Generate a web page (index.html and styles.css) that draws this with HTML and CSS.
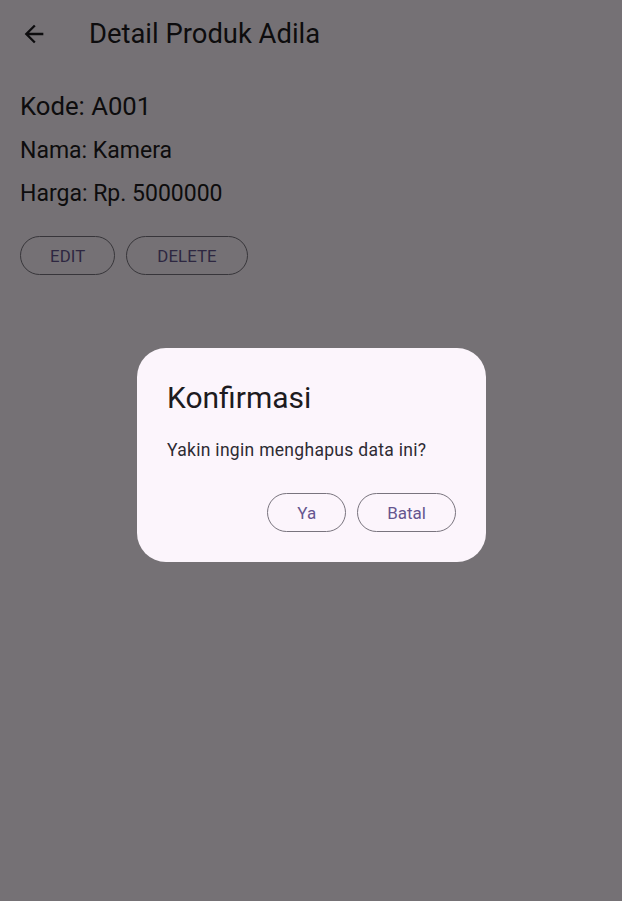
FILE: index.html
```html
<!DOCTYPE html>
<html>
<head>
<meta charset="utf-8">
<link rel="stylesheet" href="styles.css">
</head>
<body>
<div class="app">
  <header class="appbar">
    <button class="back" aria-label="Back">
      <svg width="24" height="24" viewBox="0 0 24 24"><path d="M20 11H7.83l5.59-5.59L12 4l-8 8 8 8 1.41-1.41L7.83 13H20v-2z" fill="currentColor"/></svg>
    </button>
    <h1 class="title">Detail Produk Adila</h1>
  </header>
  <main class="content">
    <p class="kode">Kode: A001</p>
    <p class="line">Nama: Kamera</p>
    <p class="line">Harga: Rp. 5000000</p>
    <div class="actions">
      <button class="obtn edit">EDIT</button>
      <button class="obtn delete">DELETE</button>
    </div>
  </main>
</div>
<div class="overlay">
  <div class="dialog">
    <h2 class="dtitle">Konfirmasi</h2>
    <p class="dtext">Yakin ingin menghapus data ini?</p>
    <div class="dactions">
      <button class="dbtn ya">Ya</button>
      <button class="dbtn batal">Batal</button>
    </div>
  </div>
</div>
</body>
</html>
```
FILE: styles.css
```css
* { box-sizing: border-box; }
html, body { margin: 0; padding: 0; }
body {
  width: 622px;
  height: 901px;
  background: #fef7ff;
  font-family: Roboto, "Liberation Sans", sans-serif;
  color: #1d1b20;
  overflow: hidden;
}
.app { height: 901px; }
.appbar {
  height: 68px;
  display: flex;
  align-items: center;
  padding-left: 20px;
}
.back {
  width: 28px; height: 28px;
  padding: 0; border: 0; background: none;
  color: #1d1b20;
  display: flex; align-items: center; justify-content: center;
}
.back svg { width: 28px; height: 28px; }
.title {
  margin: 0 0 0 41px;
  font-size: 27.4px;
  font-weight: 400;
  line-height: 34px;
}
.content { padding: 18px 20px 0; }
.kode {
  margin: 0;
  font-size: 25.7px;
  line-height: 40px;
}
.line {
  margin: 7px 0 0;
  font-size: 23px;
  line-height: 36px;
}
.actions {
  display: flex;
  gap: 11px;
  margin-top: 24px;
}
.obtn {
  height: 39px;
  border: 1.2px solid #79747e;
  border-radius: 20px;
  background: none;
  font-family: inherit;
  font-size: 16.8px;
  color: #65558f;
  letter-spacing: 0.1px;
  padding: 0 29px;
}
.obtn.delete { padding: 0 30px; }
.overlay {
  position: fixed;
  inset: 0;
  background: rgba(0,0,0,0.54);
  display: flex;
  justify-content: center;
  align-items: flex-start;
  padding-top: 348px;
}
.dialog {
  width: 349px;
  height: 214px;
  background: #fcf5fc;
  border-radius: 29px;
  padding: 30px 30px 0;
  margin-left: 1px;
}
.dtitle {
  margin: 0;
  font-size: 30px;
  font-weight: 400;
  line-height: 40px;
}
.dtext {
  margin: 20px 0 0;
  font-size: 17.5px;
  line-height: 24px;
  letter-spacing: 0.3px;
  color: #2e2b33;
}
.dactions {
  display: flex;
  justify-content: flex-end;
  gap: 11px;
  margin-top: 31px;
}
.dbtn {
  height: 39px;
  border: 1.2px solid #79747e;
  border-radius: 20px;
  background: none;
  font-family: inherit;
  font-size: 17px;
  color: #65558f;
  padding: 0 29px;
}
.dbtn.batal { padding: 0 29px; }
```
